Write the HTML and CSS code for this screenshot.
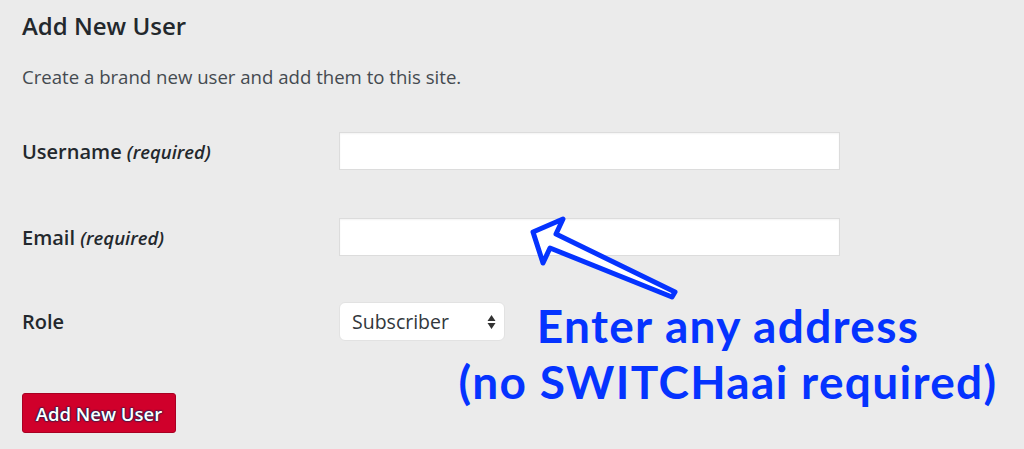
FILE: index.html
```html
<!DOCTYPE html>
<html lang="en">
<head>
    <meta charset="UTF-8">
    <title>Add New User</title>
    <link rel="stylesheet" href="styles.css">
</head>
<body>
    <div class="wrap">
        <h1>Add New User</h1>
        <p class="intro">Create a brand new user and add them to this site.</p>

        <div class="form-table">
            <div class="row">
                <label class="label" for="user_login">Username <em>(required)</em></label>
                <input class="field" type="text" id="user_login">
            </div>
            <div class="row row-email">
                <label class="label" for="email">Email <em>(required)</em></label>
                <input class="field" type="text" id="email">
            </div>
            <div class="row row-role">
                <label class="label" for="role">Role</label>
                <div class="select" id="role">
                    <span>Subscriber</span>
                    <svg class="updown" width="9" height="16" viewBox="0 0 9 16">
                        <path d="M4.5 1 L8.5 7 L0.5 7 Z M4.5 15 L8.5 9 L0.5 9 Z" fill="#333"/>
                    </svg>
                </div>
            </div>
        </div>

        <button class="btn-primary">Add New User</button>
    </div>

    <!-- annotation drawn over the screenshot -->
    <svg class="arrow" width="1024" height="449" viewBox="0 0 1024 449">
        <polygon points="533,232 563,219 556,234 675,292 672,297 550,248 543,263"
                 fill="#fff" stroke="#0533ff" stroke-width="5" stroke-linejoin="round"/>
    </svg>
    <div class="note">Enter any address<br>(no SWITCHaai required)</div>
</body>
</html>
```

FILE: styles.css
```css
body { margin: 0; background: #ebebeb; color: #23282d; font-family: "Open Sans", sans-serif; }
.wrap { padding: 0 22px; }
h1 { font-size: 24px; font-weight: 600; line-height: 32px; margin: 0; padding-top: 10px; color: #23282d; }
.intro { font-size: 18.6px; line-height: 26px; margin: 22px 0 0; color: #444a50; }

.form-table { margin-top: 42px; }
.row { display: flex; align-items: center; height: 38px; }
.row-email { margin-top: 48px; }
.row-role { margin-top: 46px; height: 39px; }
.label { width: 317px; flex: none; font-size: 20px; font-weight: 600; color: #23282d; }
.label em { font-weight: 600; font-size: 18.5px; }
.field { box-sizing: border-box; width: 501px; height: 38px; margin: 0; border: 1px solid #dcdcdc; background: #fff; box-shadow: inset 0 1px 2px rgba(0,0,0,0.05); }

.select { box-sizing: border-box; width: 166px; height: 39px; display: flex; align-items: center; justify-content: space-between; padding: 0 8px 0 12px; background: #fff; border: 1px solid #e2e2e2; border-radius: 6px; font-size: 19.5px; color: #32373c; }
.updown { display: block; }

.btn-primary { display: block; margin-top: 52px; height: 40px; width: 154px; padding: 0; background: #d0002b; border: 1px solid #a80022; border-radius: 3px; color: #fff; font-family: "Open Sans", sans-serif; font-size: 18.5px; font-weight: 600; text-shadow: 0 0 2px #14234f, 0 0 2px #14234f, 0 0 1px #14234f, 0 0 1px #14234f; }

.arrow { position: absolute; left: 0; top: 0; pointer-events: none; }
.note { position: absolute; left: 428px; top: 298px; width: 600px; text-align: center; font-family: Lato, sans-serif; font-weight: 700; font-size: 46px; letter-spacing: 1.3px; line-height: 56px; color: #0533ff; }
```
